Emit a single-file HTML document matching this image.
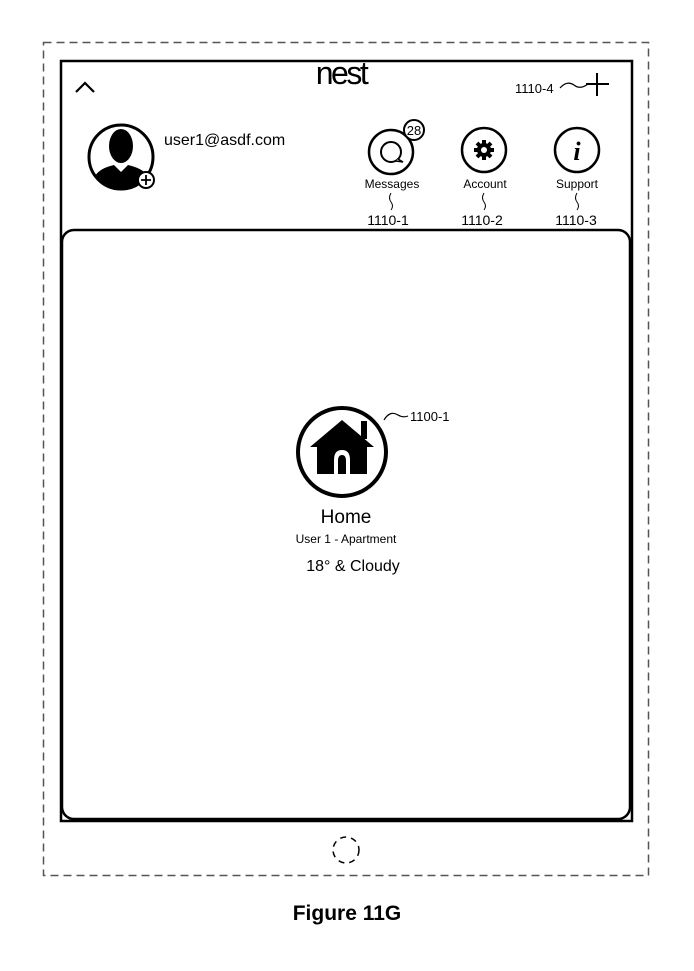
<!DOCTYPE html>
<html><head><meta charset="utf-8"><style>
html,body{margin:0;padding:0;background:#fff;}
svg{display:block;font-family:"Liberation Sans",Arial,sans-serif;}
</style></head><body>
<svg width="694" height="971" viewBox="0 0 694 971" xmlns="http://www.w3.org/2000/svg">
<rect x="43.5" y="42.5" width="605" height="833" fill="none" stroke="#555" stroke-width="1.5" stroke-dasharray="8,5"/>
<rect x="61" y="61" width="571" height="760" fill="none" stroke="#000" stroke-width="2.5"/>
<rect x="62" y="230" width="568" height="589" rx="12" fill="none" stroke="#000" stroke-width="2.5"/>
<path d="M76 92 L85 83 L94 92" fill="none" stroke="#000" stroke-width="2.2"/>
<text x="341" y="84" font-size="32" text-anchor="middle" letter-spacing="-2.5">nest</text>
<text x="515" y="93" font-size="13">1110-4</text>
<path d="M560 88 Q567 80 574 85 Q580 90 588 84" fill="none" stroke="#000" stroke-width="1.2"/>
<path d="M597 73 V96 M586 84 H609" stroke="#000" stroke-width="2"/>
<circle cx="121" cy="157" r="32" fill="#fff" stroke="#000" stroke-width="3"/>
<ellipse cx="121" cy="146" rx="12" ry="17" fill="#000"/>
<path d="M95 176 Q100 168 114 165 L121 172 L128 165 Q142 168 148 176 Q140 188 121 189 Q102 188 95 176Z" fill="#000"/>
<circle cx="146" cy="180" r="8" fill="#fff" stroke="#000" stroke-width="2"/>
<path d="M146 175 V185 M141 180 H151" stroke="#000" stroke-width="1.8"/>
<text x="164" y="145" font-size="16">user1@asdf.com</text>
<circle cx="391" cy="152" r="22" fill="#fff" stroke="#000" stroke-width="2.5"/>
<circle cx="391" cy="152" r="10" fill="none" stroke="#000" stroke-width="2"/>
<path d="M398 159 L403 162 L396 161" fill="#fff" stroke="#000" stroke-width="1.5"/>
<circle cx="414" cy="130" r="10" fill="#fff" stroke="#000" stroke-width="2"/>
<text x="414" y="135" font-size="13" text-anchor="middle">28</text>
<text x="392" y="188" font-size="12" text-anchor="middle">Messages</text>
<circle cx="484" cy="150" r="22" fill="#fff" stroke="#000" stroke-width="2.5"/>
<g transform="translate(484,150)">
<circle r="7" fill="#000"/>
<g stroke="#000" stroke-width="4"><path d="M0 -10 V10 M-10 0 H10 M-7 -7 L7 7 M-7 7 L7 -7"/></g>
<circle r="3" fill="#fff"/>
</g>
<text x="485" y="188" font-size="12" text-anchor="middle">Account</text>
<circle cx="577" cy="150" r="22" fill="#fff" stroke="#000" stroke-width="2.5"/>
<text x="577" y="160" font-size="26" font-weight="bold" font-style="italic" text-anchor="middle" font-family="Liberation Serif,serif">i</text>
<text x="577" y="188" font-size="12" text-anchor="middle">Support</text>
<g fill="none" stroke="#000" stroke-width="1">
<path d="M391 193 Q388 198 391 202 Q394 206 391 210"/>
<path d="M484 193 Q481 198 484 202 Q487 206 484 210"/>
<path d="M577 193 Q574 198 577 202 Q580 206 577 210"/>
</g>
<text x="388" y="225" font-size="14" text-anchor="middle">1110-1</text>
<text x="482" y="225" font-size="14" text-anchor="middle">1110-2</text>
<text x="576" y="225" font-size="14" text-anchor="middle">1110-3</text>
<circle cx="342" cy="452" r="44" fill="#fff" stroke="#000" stroke-width="4"/>
<path d="M342 420 L374 447 L367 447 L367 474 L317 474 L317 447 L310 447 Z" fill="#000"/>
<rect x="361" y="421" width="6" height="18" fill="#000"/>
<path d="M334 474 V460 Q334 450 342 450 Q350 450 350 460 V474 Z" fill="#fff"/>
<path d="M338 474 V461 Q338 455 342 455 Q346 455 346 461 V474 Z" fill="#000"/>
<path d="M384 420 Q390 410 398 415 Q403 418 408 416" fill="none" stroke="#000" stroke-width="1.2"/>
<text x="410" y="421" font-size="13">1100-1</text>
<text x="346" y="523" font-size="19" text-anchor="middle">Home</text>
<text x="346" y="543" font-size="12" text-anchor="middle">User 1 - Apartment</text>
<text x="353" y="571" font-size="16" text-anchor="middle">18° &amp; Cloudy</text>
<circle cx="346" cy="850" r="13" fill="none" stroke="#000" stroke-width="1.5" stroke-dasharray="6,5"/>
<text x="347" y="920" font-size="21" font-weight="bold" text-anchor="middle">Figure 11G</text>
</svg>
</body></html>
